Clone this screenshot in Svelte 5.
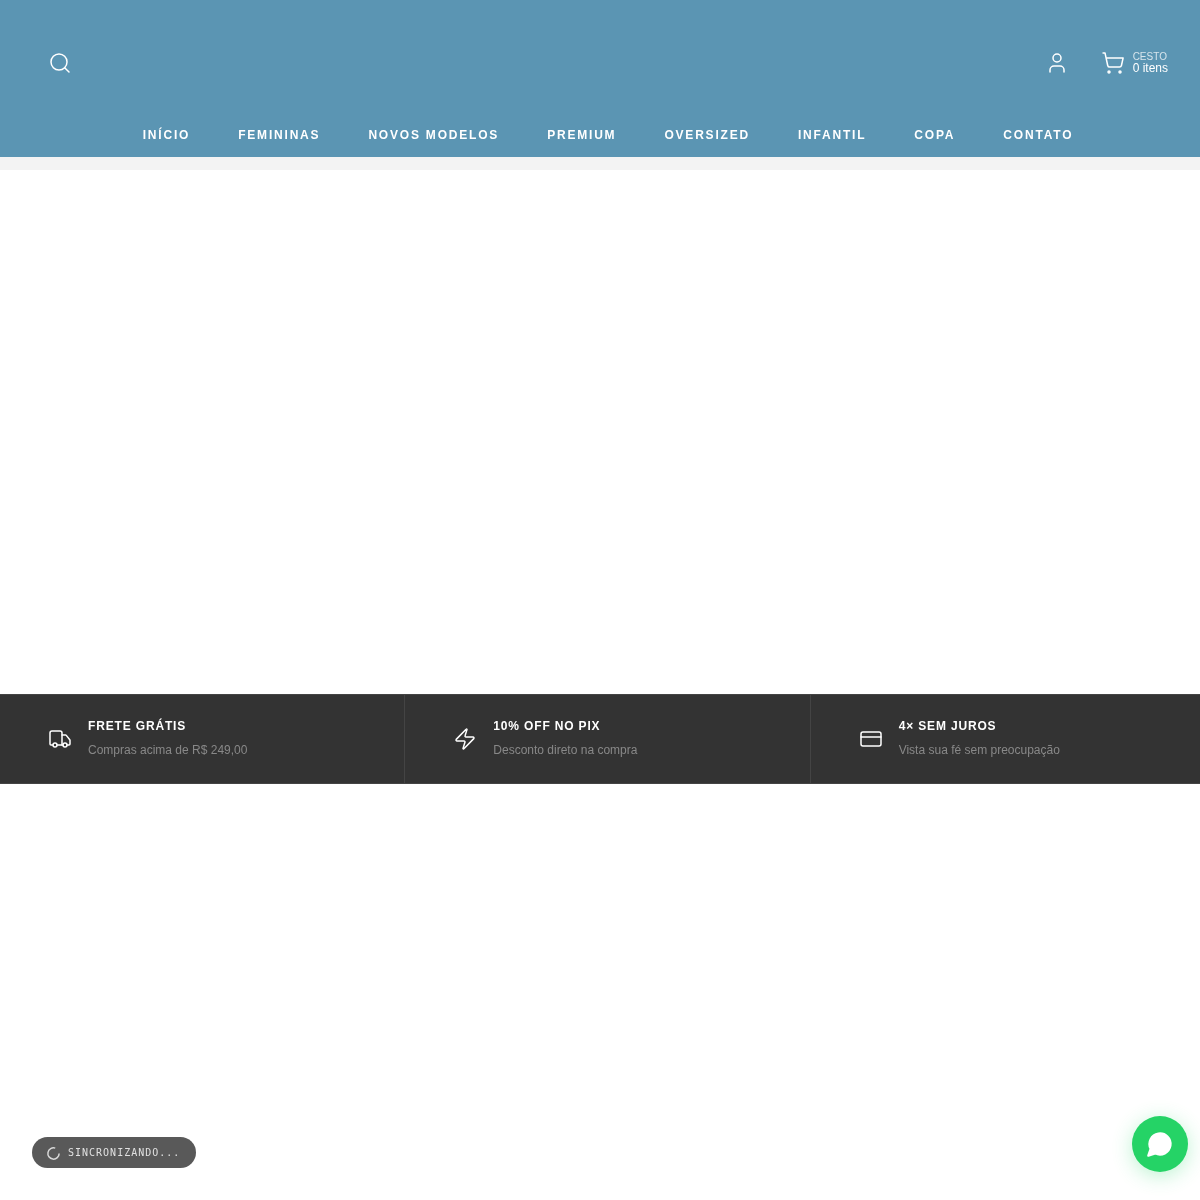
<script>
  const navItems = ['INÍCIO', 'FEMININAS', 'NOVOS MODELOS', 'PREMIUM', 'OVERSIZED', 'INFANTIL', 'COPA', 'CONTATO'];
  const perks = [
    { icon: 'truck', title: 'FRETE GRÁTIS', text: 'Compras acima de R$ 249,00' },
    { icon: 'zap', title: '10% OFF NO PIX', text: 'Desconto direto na compra' },
    { icon: 'card', title: '4× SEM JUROS', text: 'Vista sua fé sem preocupação' }
  ];
</script>

<div class="page">
  <header>
    <div class="top">
      <button class="icon-btn" aria-label="Buscar">
        <svg width="24" height="24" viewBox="0 0 24 24"><circle cx="11" cy="11" r="8" /><path d="m21 21-4.34-4.34" /></svg>
      </button>
      <div class="actions">
        <button class="icon-btn" aria-label="Conta">
          <svg width="24" height="24" viewBox="0 0 24 24"><path d="M19 21v-2a4 4 0 0 0-4-4H9a4 4 0 0 0-4 4v2" /><circle cx="12" cy="7" r="4" /></svg>
        </button>
        <div class="cart">
          <svg width="24" height="24" viewBox="0 0 24 24"><circle cx="8" cy="21" r="1" /><circle cx="19" cy="21" r="1" /><path d="M2.05 2.05h2l2.66 12.42a2 2 0 0 0 2 1.58h9.78a2 2 0 0 0 1.95-1.57l1.65-7.43H5.12" /></svg>
          <div class="cart-text">
            <span class="cart-label">CESTO</span>
            <span class="cart-count">0 itens</span>
          </div>
        </div>
      </div>
    </div>
    <nav>
      {#each navItems as item}
        <span>{item}</span>
      {/each}
    </nav>
  </header>
  <div class="strip"></div>
  <main></main>
  <section class="perks">
    {#each perks as perk}
      <div class="perk">
        <svg width="24" height="24" viewBox="0 0 24 24">
          {#if perk.icon === 'truck'}
            <path d="M14 18V6a2 2 0 0 0-2-2H4a2 2 0 0 0-2 2v11a1 1 0 0 0 1 1h2" /><path d="M15 18H9" /><path d="M19 18h2a1 1 0 0 0 1-1v-3.65a1 1 0 0 0-.22-.624l-3.48-4.35A1 1 0 0 0 17.52 8H14" /><circle cx="17" cy="18" r="2" /><circle cx="7" cy="18" r="2" />
          {:else if perk.icon === 'zap'}
            <path d="M4 14a1 1 0 0 1-.78-1.63l9.9-10.2a.5.5 0 0 1 .86.46l-1.92 6.02A1 1 0 0 0 13 10h7a1 1 0 0 1 .78 1.63l-9.9 10.2a.5.5 0 0 1-.86-.46l1.92-6.02A1 1 0 0 0 11 14z" />
          {:else}
            <rect x="2" y="5" width="20" height="14" rx="2" /><line x1="2" x2="22" y1="10" y2="10" />
          {/if}
        </svg>
        <div>
          <h4>{perk.title}</h4>
          <p>{perk.text}</p>
        </div>
      </div>
    {/each}
  </section>
</div>

<div class="sync">
  <svg class="spinner" width="15" height="15" viewBox="0 0 24 24"><path d="M21 12a9 9 0 1 1-6.219-8.56" /></svg>
  SINCRONIZANDO...
</div>

<button class="whatsapp" aria-label="WhatsApp">
  <svg width="28" height="28" viewBox="0 0 24 24"><path d="M7.9 20A9 9 0 1 0 4 16.1L2 22Z" /></svg>
</button>

<style>
  :global(body) {
    margin: 0;
    background: #fff;
  }
  .page {
    min-height: 1200px;
    font-family: 'Liberation Sans', Arial, sans-serif;
    overflow: hidden;
    will-change: transform;
  }
  svg {
    fill: none;
    stroke: currentColor;
    stroke-width: 1.5;
    stroke-linecap: round;
    stroke-linejoin: round;
    flex-shrink: 0;
    display: block;
  }
  button {
    background: none;
    border: 0;
    padding: 0;
    color: inherit;
  }
  header {
    height: 157px;
    background: #5b95b3;
    color: #fff;
    box-sizing: border-box;
    padding-top: 51px;
  }
  .top {
    display: flex;
    justify-content: space-between;
    align-items: center;
    padding: 0 32px 0 48px;
    height: 24px;
  }
  .actions {
    display: flex;
    align-items: center;
    gap: 32px;
  }
  .cart {
    display: flex;
    align-items: center;
    gap: 8px;
  }
  .cart-text {
    display: flex;
    flex-direction: column;
  }
  .cart-label {
    font-size: 10px;
    line-height: 11px;
    opacity: 0.75;
  }
  .cart-count {
    font-size: 12px;
    line-height: 13px;
  }
  nav {
    display: flex;
    justify-content: center;
    gap: 48px;
    width: 1216px;
    margin-top: 52px;
    font-size: 12px;
    line-height: 16px;
    font-weight: 700;
    letter-spacing: 1.8px;
  }
  .strip {
    height: 13px;
    background: #f3f3f3;
  }
  main {
    height: 524px;
  }
  .perks {
    display: grid;
    grid-template-columns: repeat(3, 405.33px);
    height: 90px;
    box-sizing: border-box;
    background: #333;
    border-top: 1px solid #444;
    border-bottom: 1px solid #444;
    color: #fff;
  }
  .perk {
    display: flex;
    align-items: center;
    gap: 16px;
    padding: 0 48px;
    border-right: 1px solid #444;
  }
  .perk:last-child {
    border-right: 0;
  }
  h4 {
    margin: 0 0 8px;
    font-size: 12px;
    line-height: 16px;
    font-weight: 700;
    letter-spacing: 0.84px;
  }
  p {
    margin: 0 0 2px;
    font-size: 12px;
    line-height: 16px;
    color: #888;
  }
  .sync {
    position: fixed;
    left: 32px;
    bottom: 32px;
    display: flex;
    align-items: center;
    gap: 7px;
    height: 31px;
    padding: 0 16px 0 14px;
    border-radius: 16px;
    background: #595959;
    color: #e0e0e0;
    font-family: 'DejaVu Sans Mono', monospace;
    font-size: 10px;
    letter-spacing: 1px;
    will-change: transform;
  }
  .spinner {
    stroke: #d8d8d8;
    stroke-width: 2.4;
    stroke-linecap: butt;
    margin-top: 2px;
  }
  .whatsapp {
    position: fixed;
    right: 12px;
    bottom: 28px;
    width: 56px;
    height: 56px;
    border-radius: 50%;
    background: #25d366;
    box-shadow: 0 4px 20px rgba(37, 211, 102, 0.3);
    display: flex;
    align-items: center;
    justify-content: center;
  }
  .whatsapp svg {
    fill: #fff;
    stroke: #fff;
    stroke-width: 2;
  }
</style>
